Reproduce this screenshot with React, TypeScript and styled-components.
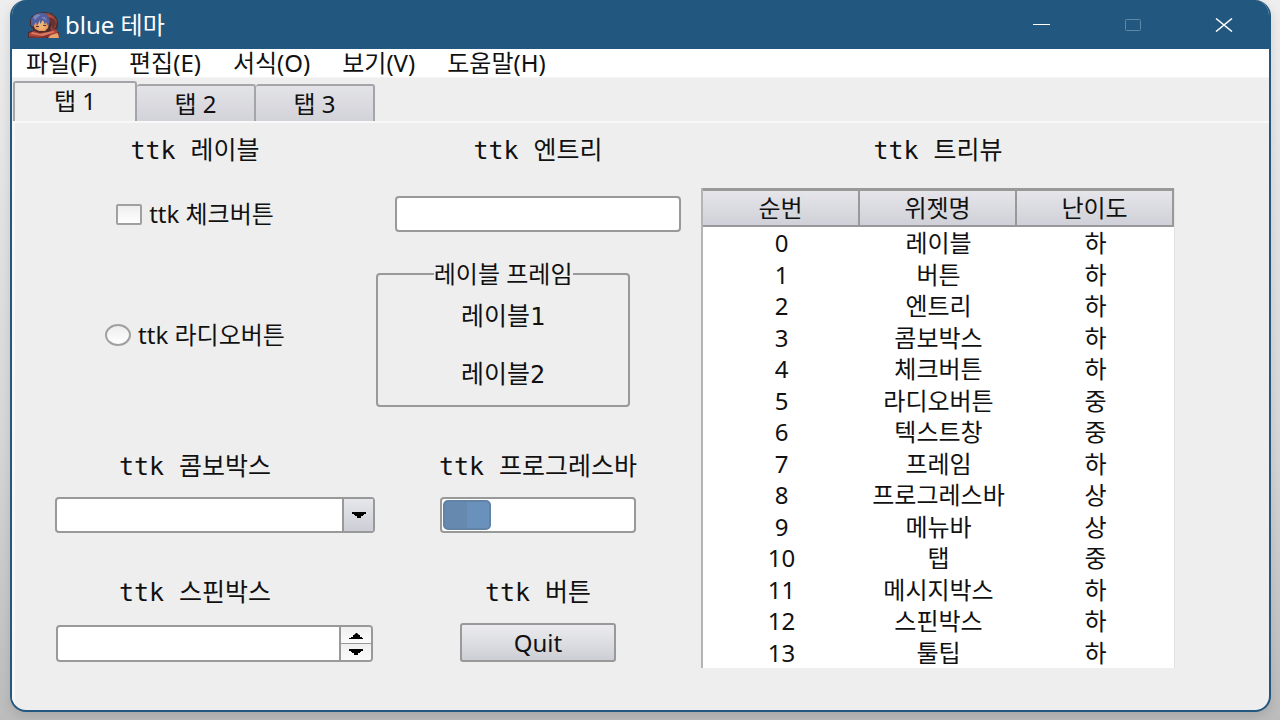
import React from 'react';
import styled, { createGlobalStyle, css } from 'styled-components';

const sans = '"Noto Sans", "Noto Sans CJK KR", sans-serif';
const mono = '"DejaVu Sans Mono", "Noto Sans CJK KR", monospace';
const edge = '#999999';
const blue = '#22577f';

const GlobalStyle = createGlobalStyle`
  * { box-sizing: border-box; }
  html, body { margin: 0; }
  body {
    background: linear-gradient(#eeeeee, #d8d8d8 60%, #bcbcbc);
    color: #111111;
    font: 24px/32px ${sans};
  }
  button, input, select { font: inherit; color: inherit; margin: 0; padding: 0; }
`;

const Desktop = styled.div`
  min-height: 100vh;
  display: flex;
  padding: 0 9px 8px 10px;
`;

const Window = styled.main`
  flex: 1;
  display: flex;
  flex-direction: column;
  overflow: hidden;
  border: 2px solid ${blue};
  border-top: 0;
  border-radius: 16px;
  background: #eeeeee;
  box-shadow: 0 4px 12px rgba(0, 0, 0, 0.12);
`;

const TitleBar = styled.header`
  height: 49px;
  display: flex;
  align-items: center;
  padding-left: 16px;
  background: ${blue};
  color: #ffffff;
`;

const AppIcon = styled.svg`
  width: 32px;
  height: 26px;
`;

const Title = styled.h1`
  margin: 0;
  padding-left: 5px;
  flex: 1;
  font: inherit;
`;

const CaptionButton = styled.button`
  width: 91px;
  height: 49px;
  display: flex;
  align-items: center;
  justify-content: center;
  border: 0;
  background: none;
`;

const MenuBar = styled.nav`
  height: 29px;
  display: flex;
  align-items: center;
  gap: 32px;
  padding-left: 14px;
  background: #ffffff;
  border-bottom: 1px solid #f5f5f5;
`;

const MenuItem = styled.button`
  border: 0;
  background: none;
`;

const TabStrip = styled.div`
  height: 45px;
  display: flex;
  align-items: flex-end;
  padding: 0 1px;
  border-bottom: 2px solid #f8f8f8;
`;

const Tab = styled.button<{ $active?: boolean }>`
  width: 119px;
  height: 37px;
  border: 2px solid #a4a5a8;
  border-left-width: 0;
  border-bottom: 0;
  border-radius: 3px 3px 0 0;
  background: linear-gradient(#e3e3e8, #d2d3d9);
  ${(p) =>
    p.$active &&
    css`
      width: 124px;
      height: 40px;
      padding-bottom: 3px;
      border-left-width: 2px;
      background: #eeeeee;
    `}
`;

const Panel = styled.section`
  flex: 1;
  display: grid;
  grid-template-columns: 686fr 474fr 94fr;
  border-left: 3px solid #f6f6f6;
`;

const Form = styled.div`
  display: grid;
  grid-template-columns: 360fr 326fr;
  grid-template-rows: 56px 70px 172px 126px 126px;
`;

const Cell = styled.div<{ $top?: boolean }>`
  min-width: 0;
  display: flex;
  flex-direction: column;
  align-items: center;
  justify-content: ${(p) => (p.$top ? 'flex-start' : 'center')};
`;

const Group = styled(Cell)`
  justify-content: flex-start;
  gap: 14px;
  padding-top: 30px;
`;

const fieldText = css`
  font: 25px/32px ${mono};
  white-space: nowrap;
`;

const FieldLabel = styled.label`
  ${fieldText}
`;

const Caption = styled.span`
  ${fieldText}
`;

const Choice = styled.label`
  display: flex;
  align-items: center;
  gap: 7px;
  white-space: nowrap;
`;

const Toggle = styled.input`
  appearance: none;
  flex: none;
  width: 26px;
  height: 21px;
  border: 2px solid #a0a0a0;
  border-radius: 2px;
  background: linear-gradient(#eeeeee, #ffffff);
  &[type='radio'] { border-radius: 50%; height: 22px; }
  &:checked { background: #6389b5; }
`;

const frame = css`
  border: 2px solid ${edge};
  border-radius: 4px;
  background: #ffffff;
`;

const Entry = styled.input`
  ${frame}
  width: 88%;
  height: 36px;
  padding: 0 6px;
`;

const LabelFrame = styled.fieldset`
  width: 78%;
  height: 149px;
  align-self: flex-start;
  margin: 9px 0 0 1px;
  padding: 11px 0 0;
  display: flex;
  flex-direction: column;
  align-items: center;
  gap: 26px;
  border: 2px solid ${edge};
  border-radius: 4px;
`;

const Legend = styled.legend`
  margin: 0 auto;
  padding: 0;
`;

const ComboFrame = styled.div`
  position: relative;
  width: 89%;
  height: 36px;
  align-self: flex-end;
`;

const Combo = styled.select`
  ${frame}
  appearance: none;
  width: 100%;
  height: 100%;
  padding: 0 40px 0 6px;
`;

const ComboArrow = styled.span`
  position: absolute;
  inset: 2px 2px 2px auto;
  width: 31px;
  display: flex;
  align-items: center;
  justify-content: center;
  border-left: 2px solid ${edge};
  background: linear-gradient(#e6e7eb, #cdced5);
  pointer-events: none;
`;

const Spin = styled.div`
  ${frame}
  width: 88%;
  height: 37px;
  margin: 2px 2px 0 0;
  align-self: flex-end;
  display: flex;
  overflow: hidden;
`;

const SpinInput = styled.input`
  flex: 1;
  min-width: 0;
  border: 0;
  padding: 0 6px;
  background: transparent;
`;

const SpinButtons = styled.div`
  width: 32px;
  display: flex;
  flex-direction: column;
  border-left: 2px solid ${edge};
`;

const SpinButton = styled.button`
  flex: 1;
  display: flex;
  align-items: center;
  justify-content: center;
  border: 0;
  background: linear-gradient(#f0f0f0, #fbfbfb);
  & + & { border-top: 1px solid ${edge}; }
`;

const Progress = styled.div`
  ${frame}
  width: 60%;
  height: 36px;
  padding: 1px;
`;

const Bar = styled.div`
  height: 100%;
  border: 2px solid #6183a6;
  border-radius: 5px;
  background: linear-gradient(90deg, #6689b0 50%, #6a90bc 50%);
`;

const PushButton = styled.button`
  width: 48%;
  height: 39px;
  border: 2px solid ${edge};
  border-radius: 3px;
  background: linear-gradient(#ebebef, #dddee3 50%, #cdced4);
`;

const TreeArea = styled.div`
  display: flex;
  flex-direction: column;
  align-items: center;
  gap: 21px;
  padding-top: 12px;
`;

const Tree = styled.table`
  width: 100%;
  table-layout: fixed;
  border-collapse: separate;
  border-spacing: 0;
  border-left: 2px solid #b4b4b4;
  border-right: 1px solid #e2e2e2;
  background: #ffffff;
`;

const Heading = styled.th`
  height: 39px;
  padding: 0;
  font-weight: 400;
  border: 2px solid ${edge};
  border-top-width: 3px;
  border-left: 0;
  background: linear-gradient(#e5e5ea, #d0d1d8);
`;

const Row = styled.tr`
  height: 31px;
  &:nth-child(even) { height: 32px; }
`;

const Item = styled.td`
  padding: 0;
  text-align: center;
  line-height: 31px;
`;

const rows = [
  ['레이블', '하'], ['버튼', '하'], ['엔트리', '하'], ['콤보박스', '하'], ['체크버튼', '하'],
  ['라디오버튼', '중'], ['텍스트창', '중'], ['프레임', '하'], ['프로그레스바', '상'],
  ['메뉴바', '상'], ['탭', '중'], ['메시지박스', '하'], ['스핀박스', '하'], ['툴팁', '하'],
];

const menus = ['파일(F)', '편집(E)', '서식(O)', '보기(V)', '도움말(H)'];

const Triangle = ({ up }: { up?: boolean }) => (
  <svg width="14" height="7" viewBox="0 0 14 7" aria-hidden="true">
    <path
      d={up ? 'M0 6H2V5H4V3H5L7 1H8L10 3H11V5H13V6H14V7H0Z' : 'M0 0H14V2H12V3H11V4H9V6H5V4H3V3H2V2H0Z'}
      fill="#000000"
    />
  </svg>
);

const Portrait = () => (
  <AppIcon viewBox="0 0 32 26" aria-hidden="true">
    <path d="M2 13V8L4 4 9 1 16 0 23 1 28 5 30 10V15L27 19 31 20V26H0V20L6 18 3 15Z" fill="#4b292c" />
    <path d="M15 1 21 1 26 4 29 9 28 15 24 19 22 17 24 12 20 5Z" fill="#8c4037" />
    <path d="M21 4 26 7 28 12 25 17 23 12Z" fill="#6a3030" />
    <path d="M19 2 24 4 27 8 24 6 20 5Z" fill="#ad5542" />
    <path d="M5 12 10 8 17 6 21 11 20 16 17 19 11 19 7 17Z" fill="#e69a5e" />
    <path d="M9 11 14 8 18 10 17 17 12 18 10 15Z" fill="#f0b174" />
    <path d="M3 13V7L6 3 11 1 17 1 20 4 22 10 20 14 18 10 17 13 15 8 12 12 12 8 9 14 8 10 5 15Z" fill="#535f9c" />
    <path d="M5 5 9 2 13 3 10 5 7 8ZM13 5 17 5 19 9 16 7Z" fill="#7a86bd" />
    <path d="M8 14H11V15H8ZM15 13H18V14H15Z" fill="#563038" />
    <path d="M1 21 6 19 12 21 20 20 27 17 30 20 24 25H1Z" fill="#ad4439" />
    <path d="M4 20 12 22 25 19 27 20 15 24 3 22Z" fill="#d87962" />
    <path d="M2 24 12 25 23 22 18 26H1Z" fill="#7c3030" />
    <path d="M23 23 30 21 31 26H20Z" fill="#eba269" />
  </AppIcon>
);

export default function App() {
  return (
    <>
      <GlobalStyle />
      <Desktop>
        <Window>
          <TitleBar>
            <Portrait />
            <Title>blue 테마</Title>
            <CaptionButton aria-label="최소화">
              <svg width="18" height="14" viewBox="0 0 18 14"><path d="M0 6.500H17" stroke="#ffffff" /></svg>
            </CaptionButton>
            <CaptionButton aria-label="최대화" disabled>
              <svg width="18" height="14" viewBox="0 0 18 14"><rect x="1.500" y="1.500" width="15" height="11" rx="1" fill="none" stroke="#5f87a6" /></svg>
            </CaptionButton>
            <CaptionButton aria-label="닫기">
              <svg width="18" height="14" viewBox="0 0 18 14"><path d="M1 0.500 17 13.500M17 0.500 1 13.500" stroke="#ffffff" strokeWidth="1.500" /></svg>
            </CaptionButton>
          </TitleBar>
          <MenuBar>
            {menus.map((m) => <MenuItem key={m}>{m}</MenuItem>)}
          </MenuBar>
          <TabStrip role="tablist">
            <Tab role="tab" aria-selected="true" $active>탭 1</Tab>
            <Tab role="tab" aria-selected="false">탭 2</Tab>
            <Tab role="tab" aria-selected="false">탭 3</Tab>
          </TabStrip>
          <Panel role="tabpanel">
            <Form>
              <Cell><Caption>ttk 레이블</Caption></Cell>
              <Cell><FieldLabel htmlFor="entry">ttk 엔트리</FieldLabel></Cell>
              <Cell><Choice><Toggle type="checkbox" />ttk 체크버튼</Choice></Cell>
              <Cell><Entry id="entry" type="text" /></Cell>
              <Cell><Choice><Toggle type="radio" />ttk 라디오버튼</Choice></Cell>
              <Cell $top>
                <LabelFrame>
                  <Legend>레이블 프레임</Legend>
                  <Caption>레이블1</Caption>
                  <Caption>레이블2</Caption>
                </LabelFrame>
              </Cell>
              <Group>
                <FieldLabel htmlFor="combo">ttk 콤보박스</FieldLabel>
                <ComboFrame>
                  <Combo id="combo" defaultValue=""><option value="" /></Combo>
                  <ComboArrow><Triangle /></ComboArrow>
                </ComboFrame>
              </Group>
              <Group>
                <Caption id="progress-title">ttk 프로그레스바</Caption>
                <Progress role="progressbar" aria-labelledby="progress-title" aria-valuenow={25}>
                  <Bar style={{ width: '25%' }} />
                </Progress>
              </Group>
              <Group>
                <FieldLabel htmlFor="spin">ttk 스핀박스</FieldLabel>
                <Spin>
                  <SpinInput id="spin" type="text" inputMode="numeric" />
                  <SpinButtons>
                    <SpinButton aria-label="증가"><Triangle up /></SpinButton>
                    <SpinButton aria-label="감소"><Triangle /></SpinButton>
                  </SpinButtons>
                </Spin>
              </Group>
              <Group>
                <Caption>ttk 버튼</Caption>
                <PushButton>Quit</PushButton>
              </Group>
            </Form>
            <TreeArea>
              <Caption id="tree-title">ttk 트리뷰</Caption>
              <Tree aria-labelledby="tree-title">
                <thead>
                  <tr><Heading>순번</Heading><Heading>위젯명</Heading><Heading>난이도</Heading></tr>
                </thead>
                <tbody>
                  {rows.map(([name, level], i) => (
                    <Row key={name}><Item>{i}</Item><Item>{name}</Item><Item>{level}</Item></Row>
                  ))}
                </tbody>
              </Tree>
            </TreeArea>
          </Panel>
        </Window>
      </Desktop>
    </>
  );
}
